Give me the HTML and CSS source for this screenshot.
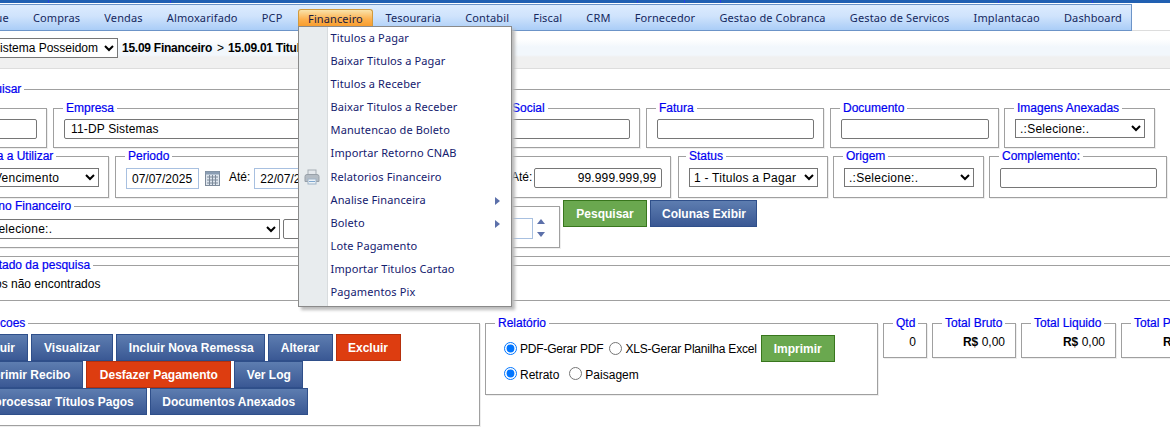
FILE: index.html
```html
<!DOCTYPE html>
<html lang="pt-BR">
<head>
<meta charset="utf-8">
<title>Titulos a Pagar</title>
<link rel="stylesheet" href="styles.css">
</head>
<body>
<div class="topbar"><i class="t1"></i><i class="t2"></i><i class="t3"></i><i class="t4"></i><i class="t5"></i><i class="t6"></i><i class="t7"></i></div>
<div class="navrow">
  <nav class="nav">
    <a class="item first">Estoque</a><a class="item">Compras</a><a class="item">Vendas</a><a class="item">Almoxarifado</a><a class="item">PCP</a>
    <div class="item active">
      <span class="active-label">Financeiro</span>
      <div class="dropdown">
        <a>Titulos a Pagar</a>
        <a>Baixar Titulos a Pagar</a>
        <a>Titulos a Receber</a>
        <a>Baixar Titulos a Receber</a>
        <a>Manutencao de Boleto</a>
        <a>Importar Retorno CNAB</a>
        <a class="has-icon"><svg class="printer" viewBox="0 0 16 16" width="16" height="16"><rect x="4" y="1" width="8" height="5" fill="#e4e8ec" stroke="#a6adb4"/><path d="M1 7.5q0-2 2-2h10q2 0 2 2v5H1z" fill="#b4bcc4" stroke="#98a0a8"/><rect x="4" y="10" width="8" height="5" fill="#eef3f7" stroke="#9fb4c8"/><rect x="5" y="12" width="6" height="1" fill="#7fa8d0"/></svg>Relatorios Financeiro</a>
        <a class="sub">Analise Financeira<b class="arrow"></b></a>
        <a class="sub">Boleto<b class="arrow"></b></a>
        <a>Lote Pagamento</a>
        <a>Importar Titulos Cartao</a>
        <a>Pagamentos Pix</a>
      </div>
    </div>
    <a class="item">Tesouraria</a><a class="item">Contabil</a><a class="item">Fiscal</a><a class="item">CRM</a><a class="item">Fornecedor</a><a class="item">Gestao de Cobranca</a><a class="item">Gestao de Servicos</a><a class="item">Implantacao</a><a class="item">Dashboard</a>
  </nav>
</div>
<div class="crumbband">
  <select class="sys"><option>Sistema Posseidom</option></select>
  <span class="crumb">15.09 Financeiro</span><span class="sep">&gt;</span><span class="crumb">15.09.01 Titulos a Pagar</span>
</div>

<fieldset class="outer search">
  <legend>Pesquisar</legend>
  <div class="row r1">
    <fieldset class="f w-code"><legend>Cod</legend><input class="txt fill" type="text"></fieldset>
    <fieldset class="f w-emp"><legend>Empresa</legend><input class="txt fill" type="text" value="11-DP Sistemas"></fieldset>
    <fieldset class="f w-soc"><legend>Razão Social</legend><input class="txt fill" type="text"></fieldset>
    <fieldset class="f w-fat"><legend>Fatura</legend><input class="txt fill" type="text"></fieldset>
    <fieldset class="f w-doc"><legend>Documento</legend><input class="txt fill" type="text"></fieldset>
    <fieldset class="f w-img"><legend>Imagens Anexadas</legend><select class="sel fill"><option>.:Selecione:.</option></select></fieldset>
  </div>
  <div class="row r2">
    <fieldset class="f w-data"><legend>Data a Utilizar</legend><select class="sel fill"><option>Vencimento</option></select></fieldset>
    <fieldset class="f w-per"><legend>Periodo</legend>
      <div class="inline">
        <input class="date" type="text" value="07/07/2025">
        <svg class="cal" viewBox="0 0 15 15" width="15" height="15"><rect x=".5" y=".5" width="14" height="14" fill="#dfe6ee" stroke="#7d8a9a"/><rect x=".5" y=".5" width="14" height="3" fill="#8a9db3"/><path d="M2 6h11M2 9h11M2 12h11M4.5 4v10M7.5 4v10M10.5 4v10" stroke="#7d8a9a"/></svg>
        <span class="ate">Até:</span>
        <input class="date" type="text" value="22/07/2025">
      </div>
    </fieldset>
    <fieldset class="f w-val"><legend>Valor</legend>
      <div class="inline">
        <input class="txt v1" type="text" value="0,00">
        <span class="ate a2">Até:</span>
        <input class="txt v2" type="text" value="99.999.999,99">
      </div>
    </fieldset>
    <fieldset class="f w-sta"><legend>Status</legend><select class="sel fill"><option>1 - Titulos a Pagar</option></select></fieldset>
    <fieldset class="f w-ori"><legend>Origem</legend><select class="sel fill"><option>.:Selecione:.</option></select></fieldset>
    <fieldset class="f w-com"><legend>Complemento:</legend><input class="txt fill" type="text"></fieldset>
  </div>
  <div class="row r3">
    <fieldset class="f w-plano"><legend>Plano Financeiro</legend>
      <div class="inline">
        <select class="sel s-plano"><option>.:Selecione:.</option></select>
        <input class="txt p2" type="text">
        <input class="date p3" type="text">
        <span class="spin"><b class="up"></b><b class="down"></b></span>
      </div>
    </fieldset>
    <div class="search-btns">
      <button class="btn green wide" type="button">Pesquisar</button>
      <button class="btn blue tight" type="button">Colunas Exibir</button>
    </div>
  </div>
</fieldset>

<fieldset class="outer result">
  <legend>Resultado da pesquisa</legend>
  <p class="msg">Registros não encontrados</p>
</fieldset>

<div class="bottom">
  <fieldset class="f acoes"><legend>Opcoes</legend>
    <div class="btnrow a"><button class="btn blue" type="button">Incluir</button><button class="btn blue" type="button">Visualizar</button><button class="btn blue nr" type="button">Incluir Nova Remessa</button><button class="btn blue" type="button">Alterar</button><button class="btn red nr2" type="button">Excluir</button></div>
    <div class="btnrow b"><button class="btn blue" type="button">Imprimir Recibo</button><button class="btn red dp" type="button">Desfazer Pagamento</button><button class="btn blue nr2" type="button">Ver Log</button></div>
    <div class="btnrow c"><button class="btn blue" type="button">Reprocessar Títulos Pagos</button><button class="btn blue dx" type="button">Documentos Anexados</button></div>
  </fieldset>
  <fieldset class="f rel"><legend>Relatório</legend>
    <div class="relrow">
      <label class="radio nar"><input type="radio" name="fmt" checked>PDF-Gerar PDF</label>
      <label class="radio nar r-x"><input type="radio" name="fmt">XLS-Gerar Planilha Excel</label>
      <button class="btn green imp" type="button">Imprimir</button>
    </div>
    <div class="relrow second">
      <label class="radio"><input type="radio" name="ori" checked>Retrato</label>
      <label class="radio r-p"><input type="radio" name="ori">Paisagem</label>
    </div>
  </fieldset>
  <fieldset class="f tot t-q"><legend>Qtd</legend><div class="val">0</div></fieldset>
  <fieldset class="f tot t-b"><legend>Total Bruto</legend><div class="val"><strong>R$</strong> 0,00</div></fieldset>
  <fieldset class="f tot t-l"><legend>Total Liquido</legend><div class="val"><strong>R$</strong> 0,00</div></fieldset>
  <fieldset class="f tot t-p"><legend>Total Pago</legend><div class="val"><strong>R$</strong> 0,00</div></fieldset>
</div>
</body>
</html>
```
FILE: styles.css
```css
* { box-sizing: border-box; }
html, body { margin: 0; padding: 0; height: 436px; overflow: hidden; background: #fff; }
body { font: 12px "Liberation Sans", Arial, sans-serif; color: #000; width: 1170px; }

.topbar { height: 3px; background: #2160b2; display: flex; }
.topbar i { display: block; width: 1px; height: 3px; background: #2a40e0; }
.topbar .t1 { margin-left: 48px; }
.topbar .t2 { margin-left: 121px; }
.topbar .t3 { margin-left: 466px; }
.topbar .t4 { margin-left: 46px; }
.topbar .t5 { margin-left: 35px; }
.topbar .t6 { margin-left: 277px; }
.topbar .t7 { margin-left: 93px; }

.navrow { height: 28px; padding-top: 1px; border-bottom: 1px solid #ddd; }
.nav { width: 1132px; height: 27px; display: flex; align-items: center; background: linear-gradient(#dcebfe, #cfe3fc 45%, #aacdf7); border: 1px solid #6c94c8; border-left: 0; font: 11px "Noto Sans", Tahoma, sans-serif; color: #15285e; letter-spacing: .12px; white-space: nowrap; }
.item { padding: 0 12.1px; display: block; flex: none; }
.item.first { margin-left: -46px; }
.item.active { position: relative; padding: 0; margin-left: 3px; }
.active-label { display: block; margin-top: 2px; padding: 0 9.5px; height: 19px; line-height: 18px; border: 1px solid #d29a3c; border-bottom-color: #e08a20; border-radius: 3px 3px 0 0; background: linear-gradient(#f9e3ab, #fdb04d 55%, #f79a28); color: #1c1c40; }
.dropdown { position: absolute; left: 0; top: 19px; width: 214px; height: 281px; background: linear-gradient(to right, #e8ecee 28px, #d8dcde 28px, #d8dcde 29px, #fff 29px); border: 1px solid #8a8a8a; box-shadow: 3px 3px 3px #bbb; z-index: 5; padding-top: 0; }
.dropdown a { display: block; height: 23.1px; line-height: 22px; padding-left: 32px; color: #14206e; position: relative; }
.printer { position: absolute; left: 5px; top: 3px; }
.arrow { position: absolute; right: 11px; top: 8px; width: 0; height: 0; border-left: 5px solid #5c70aa; border-top: 4px solid transparent; border-bottom: 4px solid transparent; }

.crumbband { height: 38px; padding-top: 7px; display: flex; align-items: flex-start; background: linear-gradient(#fff 8px, #f2f7fc 16px, #f2f7fc 24px, #f0f0f0 26px); border-bottom: 1px solid #ddd; }
.sys { width: 131px; margin-left: -13px; height: 20px; flex: none; padding: 0; border: 1px solid #767676; background: #fff; font: 12px "Liberation Sans", sans-serif; }
.crumb { font-weight: bold; margin-top: 3px; margin-left: 4px; white-space: nowrap; letter-spacing: -.25px; flex: none; }
.sep { margin: 3px 0 0 5px; flex: none; }

fieldset { margin: 0; min-width: 0; }
legend { line-height: 14px; padding: 0 3px; color: #0000f0; white-space: nowrap; -webkit-text-stroke: .2px #0000f0; }
.outer { border: 0; border-top: 1px solid #a0a0a0; border-bottom: 1px solid #a0a0a0; margin-left: -50px; width: 1280px; padding: 0; }
.outer > legend { margin-left: 15px; }
.search { margin-top: 13px; height: 175px; }
.f { border: 1px solid #a0a0a0; box-shadow: 1px 1px 0 #eee; padding: 4px 9px 0 10px; flex: none; }
.f > legend { margin-left: -1px; }
.fill { width: 100%; }
.row { display: flex; }
.r1 { margin-top: 5px; gap: 6px; height: 47px; }
.r1 .f { height: 47px; }
.w-code { margin-left: 10px; width: 87px; }
.w-emp { width: 402px; }
.w-soc { width: 179px; }
.w-fat { width: 178px; }
.w-doc { width: 169px; margin-right: -1px; }
.w-img { width: 151px; }
.r2 { margin-top: 1px; gap: 6px; height: 49px; }
.r2 .f { height: 49px; padding-top: 5px; }
.w-data { margin-left: 10px; width: 149px; }
.r2 .w-data { padding-left: 28px; }
.w-data > legend { margin-left: -14px; }
.w-per { width: 263px; }
.w-val { width: 287px; margin-right: 1px; }
.w-sta { width: 150px; margin-right: -1px; }
.w-sta > legend { margin-left: -3px; }
.w-ori { width: 151px; margin-right: -1px; }
.w-com { width: 178px; }
.inline { display: flex; align-items: flex-start; }
.txt { height: 20px; border: 1px solid #767676; border-radius: 2px; padding: 0 6px; background: #fff; font: 12px "Liberation Sans", sans-serif; letter-spacing: .15px; }
.sel { height: 19px; border: 1px solid #767676; padding: 0; background: #fff; font: 12px "Liberation Sans", sans-serif; color: #000; letter-spacing: .25px; }
.date { height: 21px; width: 73px; border: 1px solid #a8c0e0; padding: 0 5px; background: #fff; font: 12px "Liberation Sans", sans-serif; flex: none; }
.cal { margin: 3px 9px 0 6px; flex: none; }
.ate { line-height: 18px; margin-right: 4px; }
.a2 { margin-right: 2px; }
.v1 { width: 111px; margin-right: 5px; }
.v2 { width: 128px; text-align: right; padding-right: 5px; }
.r3 { margin-top: 2px; height: 50px; align-items: flex-start; }
.w-plano { margin: -1px 0 0 10px; width: 600px; height: 49px; padding: 5px 9px 0 17px; }
.w-plano > legend { margin-left: 0; }
.s-plano { width: 302px; height: 20px; margin: 1px 3px 0 0; flex: none; }
.p2 { width: 180px; margin: 1px 4px 0 0; flex: none; }
.p3 { width: 66px; }
.spin { display: flex; flex-direction: column; gap: 8px; margin: 1px 0 0 4px; }
.spin b { width: 0; height: 0; border-left: 4px solid transparent; border-right: 4px solid transparent; }
.spin .up { border-bottom: 5px solid #5c70aa; }
.spin .down { border-top: 5px solid #5c70aa; }
.search-btns { display: flex; gap: 3px; margin-left: 3px; flex: none; }
.btn { height: 27px; border: 1px solid; padding: 0 12px; font: bold 12px "Liberation Sans", Arial, sans-serif; color: #fff; white-space: nowrap; flex: none; }
.wide { width: 84px; }
.tight { padding: 0 11px; width: 107px; }
.nr { width: 149px; }
.nr2 { width: 65px; padding: 0; }
.btnrow.b .nr2 { width: 69px; }
.dp { width: 145px; padding: 0; }
.dx { width: 158px; padding: 0; }
.blue { background: linear-gradient(#5d7db0, #3a5894); border-color: #2f4f8a; }
.green { background: #6aa84f; border-color: #38761d; }
.red { background: #dd3d10; border-color: #b5300c; }

.result { margin-top: 1px; height: 43px; }
.msg { margin: 5px 0 0 7px; line-height: 14px; }

.bottom { margin-top: 22px; display: flex; gap: 5px; align-items: flex-start; }
.acoes { margin-left: -50px; width: 530px; height: 110px; padding: 4px 0 0 15px; margin-top: -7px; }
.acoes > legend { margin-left: 15px; }
.btnrow { display: flex; gap: 3px; height: 27px; }
.rel { width: 393px; height: 79px; padding: 5px 0 0 18px; margin-top: -7px; }
.rel > legend { margin-left: -9px; }
.relrow { display: flex; align-items: center; height: 27px; }
.relrow.second { height: 14px; margin-top: 5px; }
.radio { display: flex; align-items: center; white-space: nowrap; padding-top: 1px; }
.nar { letter-spacing: -.2px; }
.radio input { margin: 0 3px 2px 0; width: 13px; height: 13px; flex: none; }
.r-x { margin-left: 6px; }
.r-p { margin-left: 10px; }
.imp { margin-left: 4px; width: 74px; }
.tot { margin-top: -7px; height: 42px; padding: 5px 10px 0 0; }
.tot > legend { margin-left: 9px; }
.val { text-align: right; }
.t-q { width: 44px; }
.t-b { width: 84px; }
.t-l { width: 95px; }
.t-p { width: 95px; }
```
